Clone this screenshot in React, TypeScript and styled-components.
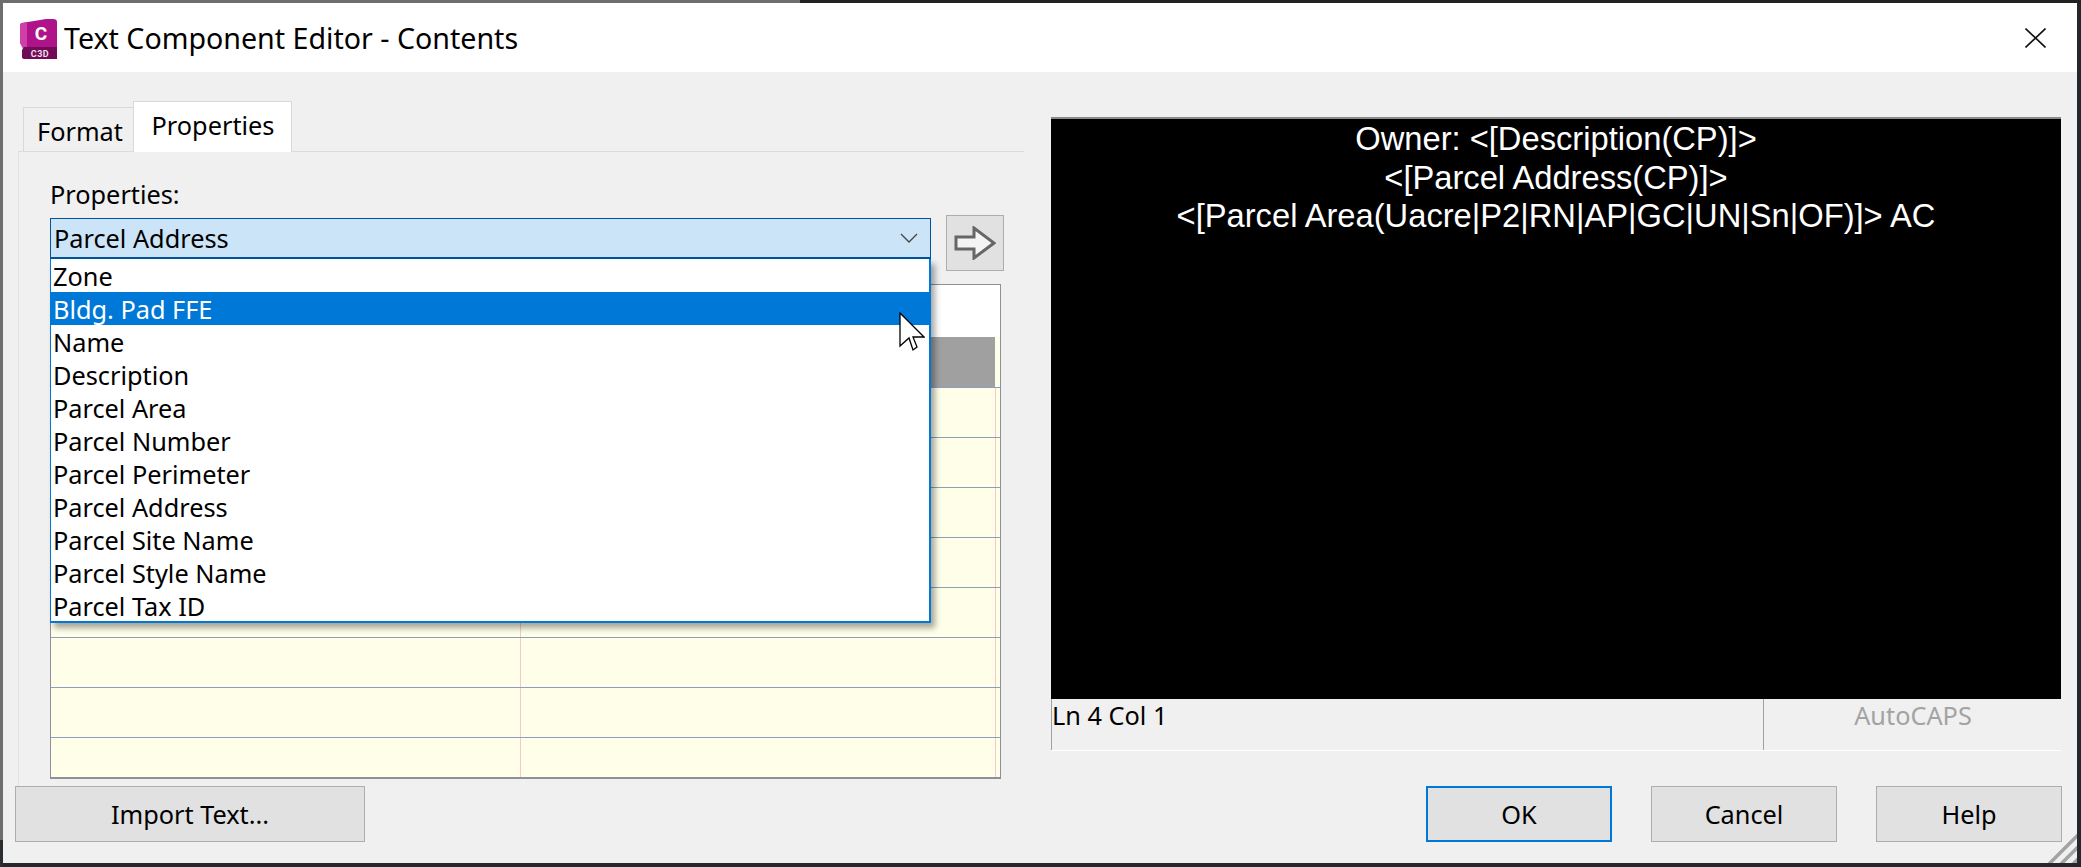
import styled, { createGlobalStyle } from "styled-components";

const Global = createGlobalStyle`
    html, body {
        margin: 0;
        padding: 0;
        background: #262626;
    }
    * {
        box-sizing: border-box;
    }
`

const OPTIONS = [
    "Zone",
    "Bldg. Pad FFE",
    "Name",
    "Description",
    "Parcel Area",
    "Parcel Number",
    "Parcel Perimeter",
    "Parcel Address",
    "Parcel Site Name",
    "Parcel Style Name",
    "Parcel Tax ID",
]

const PREVIEW = [
    "Owner: <[Description(CP)]>",
    "<[Parcel Address(CP)]>",
    "<[Parcel Area(Uacre|P2|RN|AP|GC|UN|Sn|OF)]> AC",
]

const AppIcon = () => (
    <IconSvg viewBox="0 0 37 40">
        <path d="M2 4 L26 0 L33 0 Q37 0 37 3 L37 28 L3 28 L0 24 L0 6 Q0 4 2 4 Z" fill="#b0128a" />
        <path d="M0 6 L2 4 L7 3 L7 30 L4 32 L0 24 Z" fill="#cf3fa9" />
        <path d="M4 28 L37 28 L37 40 L5 40 Q2 40 2 38 L2 31 Z" fill="#6f0c55" />
        <text x="21" y="21" textAnchor="middle" fontFamily="Roboto, sans-serif" fontWeight="700" fontSize="19" fill="#fff">C</text>
        <text x="20" y="37.5" textAnchor="middle" fontFamily="Roboto, sans-serif" fontWeight="700" fontSize="9" fill="#f4dbee" letterSpacing="0.5">C3D</text>
    </IconSvg>
)

const Cursor = () => (
    <CursorSvg viewBox="0 0 26 40">
        <path d="M1 1 L1 34 L10 26 L14 38 L18 35 L14 25 L25 25 Z" fill="#fff" stroke="#000" strokeWidth="1.3" strokeLinejoin="miter" />
    </CursorSvg>
)

const App = () => {
    return (<Screen>
        <Global />
        <Window>
            <TitleBar>
                <AppIcon />
                <Title>Text Component Editor - Contents</Title>
                <CloseIcon viewBox="0 0 21 20">
                    <path d="M0.5 0.5 L20.5 19.5 M20.5 0.5 L0.5 19.5" stroke="#111" strokeWidth="1.6" fill="none" />
                </CloseIcon>
            </TitleBar>
            <Body>
                <Main>
                    <LeftColumn>
                        <Tabs>
                            <Tab>Format</Tab>
                            <Tab $active>Properties</Tab>
                        </Tabs>
                        <Pane>
                            <FieldLabel>Properties:</FieldLabel>
                            <ComboRow>
                                <Combo>
                                    <ComboBox>
                                        Parcel Address
                                        <Chevron viewBox="0 0 18 10">
                                            <path d="M1 1 L9 9 L17 1" stroke="#444" strokeWidth="1.3" fill="none" />
                                        </Chevron>
                                    </ComboBox>
                                    <DropList>
                                        {OPTIONS.map((o, i) => <DropItem key={o} $selected={i === 1}>{o}</DropItem>)}
                                        <Cursor />
                                    </DropList>
                                </Combo>
                                <ArrowButton>
                                    <svg width="42" height="34" viewBox="0 0 42 34">
                                        <path d="M2 11 L20 11 L20 2 L40 17 L20 32 L20 23 L2 23 Z" fill="#f4f4f4" stroke="#666" strokeWidth="3" />
                                    </svg>
                                </ArrowButton>
                            </ComboRow>
                            <Sheet>
                                <SheetTop />
                                <SheetHead />
                                {[0, 1, 2, 3, 4, 5, 6, 7].map(i => <SheetRow key={i} />)}
                            </Sheet>
                        </Pane>
                    </LeftColumn>
                    <RightColumn>
                        <Preview>
                            {PREVIEW.map(l => <PreviewLine key={l}>{l}</PreviewLine>)}
                        </Preview>
                        <StatusBar>
                            <StatusLeft>Ln 4 Col 1</StatusLeft>
                            <StatusRight>AutoCAPS</StatusRight>
                        </StatusBar>
                    </RightColumn>
                </Main>
                <Footer>
                    <Button $wide>Import Text...</Button>
                    <FooterRight>
                        <Button $primary>OK</Button>
                        <Button>Cancel</Button>
                        <Button>Help</Button>
                    </FooterRight>
                </Footer>
                <Grip viewBox="0 0 30 30">
                    <path d="M2 31 L33 0 M14 31 L33 12 M26 31 L33 24" stroke="#a3a3a3" strokeWidth="3.5" fill="none" />
                </Grip>
            </Body>
        </Window>
    </Screen>)
}

const font = `"Noto Sans", "Open Sans", sans-serif`
const uiSize = `25.3px`

const Screen = styled.div`
    width: 2081px;
    height: 867px;
    overflow: hidden;
    padding: 3px 4px 4px 3px;
    background:
        linear-gradient(90deg, #6e6e6e 0, #6e6e6e 800px, #222 800px) top left / 100% 3px no-repeat,
        linear-gradient(180deg, #6e6e6e 0, #6e6e6e 840px, #2a2e33 840px) top left / 3px 100% no-repeat,
        #24272b;
    font-family: ${font};
    color: #000;
`

const Window = styled.div`
    height: 860px;
    display: flex;
    flex-direction: column;
    background: #f0f0f0;
`

const TitleBar = styled.div`
    height: 69px;
    flex: none;
    display: flex;
    align-items: center;
    padding: 0 31px 0 17px;
    background: #fff;
`

const IconSvg = styled.svg`
    width: 37px;
    height: 40px;
    flex: none;
    margin-top: 3px;
`

const Title = styled.div`
    margin-left: 7px;
    font-size: 28.6px;
    flex: 1;
`

const CloseIcon = styled.svg`
    width: 21px;
    height: 20px;
    flex: none;
`

const Body = styled.div`
    flex: 1;
    position: relative;
    display: flex;
    flex-direction: column;
    padding: 29px 15px 20px 12px;
`

const Main = styled.div`
    display: flex;
    flex: none;
    height: 685px;
`

const LeftColumn = styled.div`
    width: 1009px;
    flex: none;
    display: flex;
    flex-direction: column;
`

const Tabs = styled.div`
    display: flex;
    align-items: flex-end;
    padding-left: 8px;
    height: 50px;
    flex: none;
`

const Tab = styled.div<{ $active?: boolean }>`
    height: ${p => p.$active ? "51px" : "44px"};
    width: ${p => p.$active ? "159px" : "110px"};
    display: flex;
    align-items: center;
    justify-content: center;
    padding: ${p => p.$active ? "0 0 4px 1px" : "2px 0 0 3px"};
    font-size: ${uiSize};
    background: ${p => p.$active ? "#fff" : "#f0f0f0"};
    border: 1px solid #d9d9d9;
    border-bottom: none;
    border-right: ${p => p.$active ? "1px solid #d9d9d9" : "none"};
    margin-bottom: ${p => p.$active ? "-1px" : "0"};
    position: relative;
`

const Pane = styled.div`
    flex: 1;
    margin-left: 3px;
    padding: 0 23px 0 31px;
    border-top: 1px solid #dcdcdc;
    border-left: 1px solid #e2e2e2;
    display: flex;
    flex-direction: column;
    width: 1006px;
`

const FieldLabel = styled.div`
    height: 66px;
    flex: none;
    display: flex;
    align-items: center;
    padding-top: 18px;
    font-size: ${uiSize};
`

const ComboRow = styled.div`
    display: flex;
    align-items: flex-start;
    gap: 15px;
    margin-top: -3px;
    flex: none;
    height: 69px;
`

const Combo = styled.div`
    width: 881px;
    position: relative;
    flex: none;
`

const ComboBox = styled.div`
    height: 41px;
    margin-top: 3px;
    background: #cce4f7;
    border: 1px solid #005499;
    border-bottom-width: 2px;
    padding: 0 12px 0 3px;
    font-size: ${uiSize};
    display: flex;
    align-items: center;
    justify-content: space-between;
`

const Chevron = styled.svg`
    width: 18px;
    height: 10px;
`

const DropList = styled.div`
    position: absolute;
    top: 44px;
    left: 0;
    width: 881px;
    height: 364px;
    background: #fff;
    border: 1px solid #0078d7;
    border-width: 0 2px 2px 1px;
    box-shadow: 4px 5px 6px rgba(0, 0, 0, 0.35);
    z-index: 2;
`

const DropItem = styled.div<{ $selected?: boolean }>`
    height: 33.1px;
    padding-left: 2px;
    display: flex;
    align-items: center;
    font-size: ${uiSize};
    background: ${p => p.$selected ? "#0078d7" : "transparent"};
    color: ${p => p.$selected ? "#fff" : "#000"};
`

const CursorSvg = styled.svg`
    position: absolute;
    top: 53px;
    left: 848px;
    width: 26px;
    height: 40px;
`

const ArrowButton = styled.div`
    width: 58px;
    height: 56px;
    flex: none;
    background: #e1e1e1;
    border: 1px solid #adadad;
    display: flex;
    align-items: center;
    justify-content: center;
`

const Sheet = styled.div`
    width: 951px;
    height: 495px;
    flex: none;
    background: #fffee9;
    border: 1px solid #8b9099;
    border-bottom-width: 2px;
    position: relative;
    overflow: hidden;
`

const SheetTop = styled.div`
    height: 52px;
    background: #fff;
`

const SheetHead = styled.div`
    height: 50px;
    margin-right: 5px;
    background: #a0a0a0;
`

const SheetRow = styled.div`
    height: 50px;
    display: grid;
    grid-template-columns: 470px 475px 1fr;
    border-top: 1px solid #8ba0bd;
    &::before {
        content: "";
        border-right: 1px solid #f6c9c6;
    }
    &::after {
        content: "";
        grid-column: 2;
        border-right: 1px solid #f6c9c6;
    }
`

const RightColumn = styled.div`
    width: 1010px;
    margin-left: 27px;
    padding-top: 16px;
    flex: none;
    display: flex;
    flex-direction: column;
`

const Preview = styled.div`
    height: 582px;
    flex: none;
    padding-top: 1px;
    background: #000;
    border-top: 2px solid #8a8a8a;
    color: #fff;
    font-family: "Liberation Sans", Arial, sans-serif;
    font-size: 32.7px;
    text-align: center;
`

const PreviewLine = styled.div`
    height: 38.5px;
    line-height: 38.5px;
`

const StatusBar = styled.div`
    height: 52px;
    flex: none;
    display: flex;
    border-bottom: 1px solid #fff;
`

const StatusLeft = styled.div`
    width: 713px;
    flex: none;
    padding-left: 0;
    border-left: 1px solid #a0a0a0;
    border-right: 1px solid #a0a0a0;
    font-size: ${uiSize};
    line-height: 32px;
`

const StatusRight = styled.div`
    flex: 1;
    padding-left: 1px;
    text-align: center;
    color: #a3a3a3;
    font-size: ${uiSize};
    line-height: 32px;
`

const Footer = styled.div`
    display: flex;
    justify-content: space-between;
    height: 56px;
    flex: none;
`

const FooterRight = styled.div`
    display: flex;
    gap: 39px;
`

const Button = styled.div<{ $wide?: boolean; $primary?: boolean }>`
    width: ${p => p.$wide ? "350px" : "186px"};
    height: 56px;
    display: flex;
    align-items: center;
    justify-content: center;
    background: #e1e1e1;
    border: ${p => p.$primary ? "2px solid #0078d7" : "1px solid #adadad"};
    font-size: ${uiSize};
`

const Grip = styled.svg`
    position: absolute;
    right: 0;
    bottom: 0;
    width: 30px;
    height: 30px;
`

export default App
